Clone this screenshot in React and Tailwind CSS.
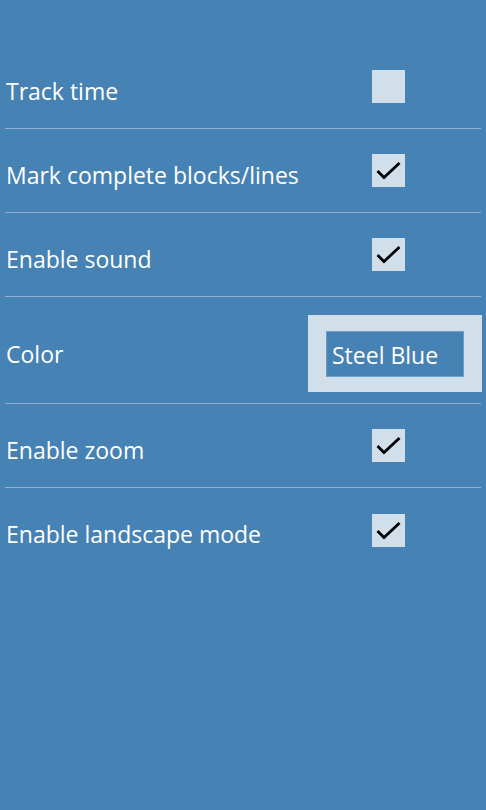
import React from "react";

function Check({ checked }) {
  return (
    <div className="w-[33px] h-[33px] bg-[#d1dfeb] mr-[76px] shrink-0 flex">
      {checked && (
        <svg width="33" height="33" viewBox="0 0 33 33">
          <path d="M5.5 17 L12 23.5 L27.5 9" fill="none" stroke="#000" strokeWidth="2.8" />
        </svg>
      )}
    </div>
  );
}

function Row({ label, children, tall, last }) {
  return (
    <div
      className={`flex items-center justify-between ${last ? "" : "border-b border-[#8fb3d4]"} ${
        tall ? "h-[107px]" : "h-[84px]"
      }`}
    >
      <span className="pl-px pt-[9px] text-[23px] text-white leading-none">{label}</span>
      {children}
    </div>
  );
}

export default function App() {
  return (
    <div
      className="w-[486px] h-[810px] bg-[#4682b4] px-[5px] pt-[45px]"
      style={{ fontFamily: '"Open Sans", "Noto Sans", sans-serif' }}
    >
      <Row label="Track time">
        <Check checked={false} />
      </Row>
      <Row label="Mark complete blocks/lines">
        <Check checked />
      </Row>
      <Row label="Enable sound">
        <Check checked />
      </Row>
      <Row label="Color" tall>
        <div className="bg-[#d1dfeb] pl-[18px] pr-[18px] pt-[16px] pb-[15px] mr-[-1px] mt-[6px]">
          <div className="w-[138px] h-[46px] bg-[#4682b4] border border-[#6f9ec6] flex items-center pl-[5px] pt-[3px] text-[23px] text-white leading-none">
            Steel Blue
          </div>
        </div>
      </Row>
      <Row label="Enable zoom">
        <Check checked />
      </Row>
      <Row label="Enable landscape mode" last>
        <Check checked />
      </Row>
    </div>
  );
}
